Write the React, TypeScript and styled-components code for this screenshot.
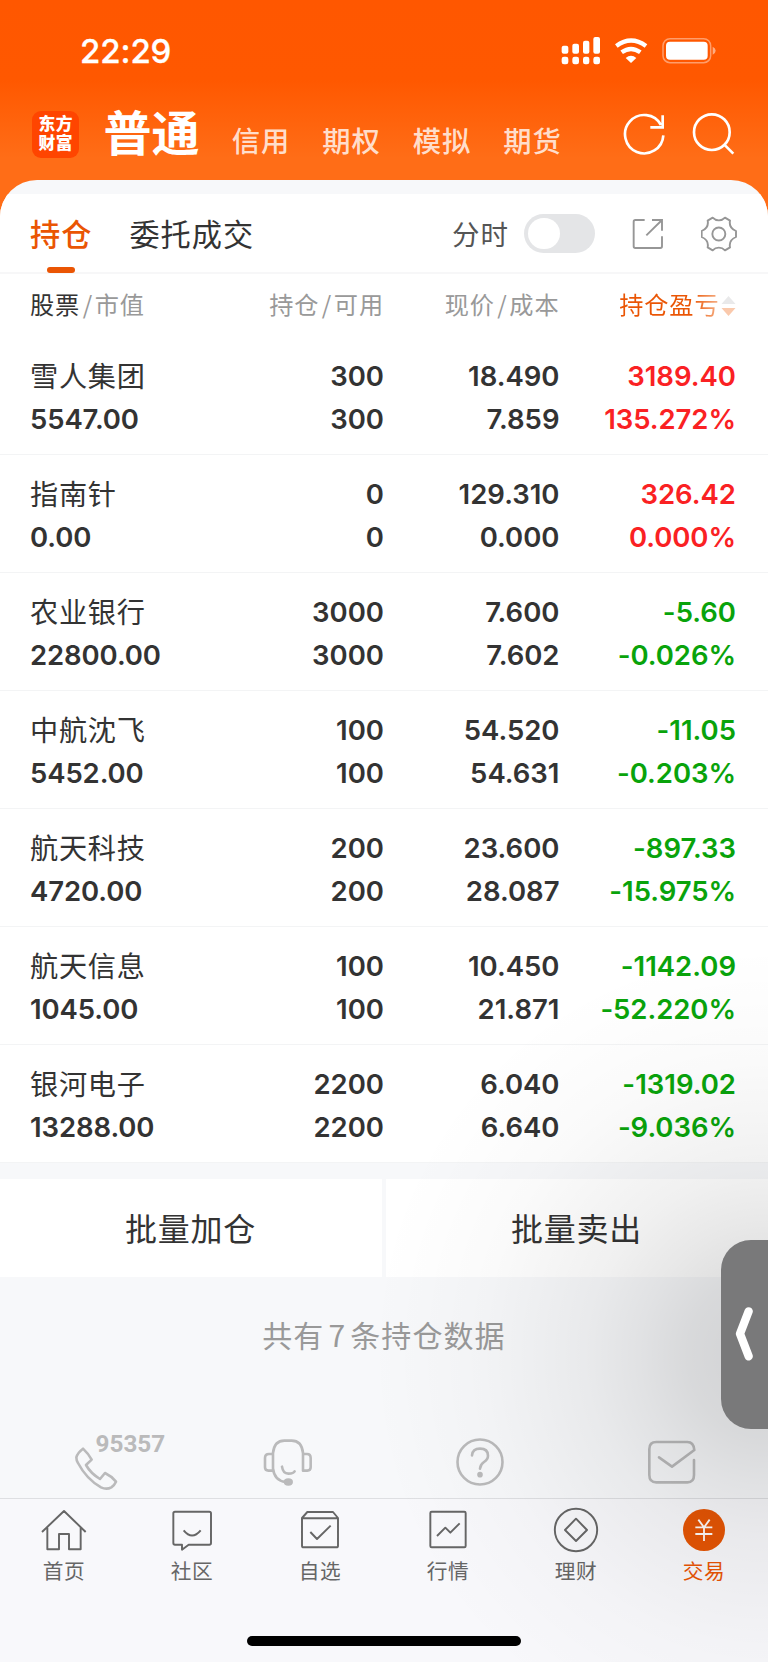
import React from "react";
import styled, { createGlobalStyle } from "styled-components";

const Global = createGlobalStyle`
  * { box-sizing: border-box; }
  body { margin: 0; background: #fff; }
`;

const CJK = `"Noto Sans CJK SC", sans-serif`;
const NUM = `Inter, "Noto Sans CJK SC", sans-serif`;

const Screen = styled.div`
  position: relative;
  width: 768px;
  height: 1662px;
  overflow: hidden;
  display: flex;
  flex-direction: column;
  background: #f7f8fa;
  font-family: ${CJK};
  color: #333;
`;

const Header = styled.header`
  height: 240px;
  margin-bottom: -60.5px;
  flex: none;
  background: linear-gradient(#ff5700 0, #ff5800 80px, #ff6d17 158px, #ff6d17 100%);
`;

const StatusBar = styled.div`
  height: 102px;
  display: flex;
  align-items: center;
  padding: 0 51px 0 80px;
  color: #fff;
`;

const Clock = styled.span`
  flex: 1;
  font: 500 33px/40px ${NUM};
  letter-spacing: -0.1px;
  -webkit-text-stroke: 0.3px #fff;
`;

const StatusIcons = styled.svg`
  width: 156px;
  height: 30px;
`;

const NavBar = styled.div`
  height: 64px;
  display: flex;
  align-items: center;
  padding: 0 33px 0 32px;
  color: #fff;
`;

const Logo = styled.div`
  width: 47px;
  height: 47px;
  border-radius: 9px;
  background: #ff4500;
  text-align: center;
  font-family: "Liberation Sans", "Noto Sans CJK SC", sans-serif;
  font-size: 16.8px;
  font-weight: 900;
  line-height: 19.7px;
  letter-spacing: 0.5px;
  padding: 4.2px 0 0 0.5px;
`;

const Account = styled.span<{ $active?: boolean }>`
  font-size: ${(p) => (p.$active ? 48 : 28.3)}px;
  font-weight: ${(p) => (p.$active ? 700 : 500)};
  line-height: 48px;
  letter-spacing: ${(p) => (p.$active ? 0 : 0.8)}px;
  white-space: nowrap;
  margin: ${(p) => (p.$active ? "-8px 0 0 24.5px" : "12px 0 0 32.3px")};
  color: ${(p) => (p.$active ? "#fff" : "rgba(255,255,255,.8)")};
`;

const NavIcons = styled.svg`
  width: 112px;
  height: 44px;
  margin-left: auto;
`;

const Sheet = styled.main`
  flex: 1;
  position: relative;
  border-radius: 37px 37px 0 0;
  background: #f7f8fa;
  overflow: hidden;
  display: flex;
  flex-direction: column;
  padding-top: 14.5px;
`;

const TabRow = styled.div`
  height: 80px;
  flex: none;
  display: flex;
  align-items: center;
  padding: 0 31.5px 0 30px;
  background: #fff;
  border-bottom: 2px solid #f7f7f8;
`;

const Tab = styled.span<{ $active?: boolean }>`
  position: relative;
  font-size: 30.2px;
  line-height: 78px;
  height: 78px;
  letter-spacing: 1px;
  font-weight: ${(p) => (p.$active ? 500 : 400)};
  color: ${(p) => (p.$active ? "#ea5504" : "#333")};
  margin-right: 37px;
  &::after {
    content: "";
    display: ${(p) => (p.$active ? "block" : "none")};
    position: absolute;
    left: 17px;
    bottom: -0.5px;
    width: 28px;
    height: 5.5px;
    border-radius: 3px;
    background: #ea5504;
  }
`;

const Tools = styled.div`
  margin-left: auto;
  display: flex;
  align-items: center;
  height: 78px;
`;

const ToolLabel = styled.span`
  font-size: 27.5px;
  line-height: 40px;
  margin-top: -1px;
  letter-spacing: 1px;
  color: #555;
`;

const Toggle = styled.span`
  width: 70.5px;
  height: 39.5px;
  border-radius: 20px;
  background: #e4e5e7;
  padding: 4px;
  margin: 0.5px 37.5px 0 15px;
  &::before {
    content: "";
    display: block;
    width: 31.5px;
    height: 31.5px;
    border-radius: 50%;
    background: #fff;
  }
`;

const ToolIcon = styled.svg<{ $w: number }>`
  width: ${(p) => p.$w}px;
  height: 36px;
  margin-top: 2px;
  fill: none;
  stroke: #969696;
  stroke-width: 5.7;
  & + & {
    margin-left: 36.5px;
  }
`;

const Line = styled.div`
  display: grid;
  grid-template-columns: 210px 144px 175.5px 176.5px;
  padding: 0 32px 0 30px;
  & > :nth-child(n + 2) {
    text-align: right;
  }
`;

const Columns = styled(Line)`
  height: 63px;
  flex: none;
  background: #fff;
  font-size: 24.2px;
  line-height: 60px;
  letter-spacing: 0.9px;
  color: #999;
`;

const Strong = styled.b`
  font-weight: 400;
  color: #333;
`;

const Slash = styled.span`
  display: inline-block;
  width: 14.5px;
  text-align: center;
  letter-spacing: 0;
`;

const SortHead = styled.span`
  display: flex;
  justify-content: flex-end;
  align-items: center;
  height: 60px;
  span {
    background: linear-gradient(90deg, #ea5504 72%, #f6b48c 100%);
    background-clip: text;
    -webkit-background-clip: text;
    color: transparent;
  }
  svg {
    width: 15px;
    height: 22px;
    margin: 4px 0 0 1.5px;
  }
`;

const Holding = styled.div`
  height: 118px;
  flex: none;
  background: #fff;
  padding-top: 18px;
  border-bottom: 1px solid #f3f4f5;
`;

const Cells = styled(Line)`
  height: 42.6px;
  font: 600 27.5px/42.6px ${NUM};
  font-feature-settings: "calt" 0;
`;

const Name = styled.span`
  font: 400 28.2px/40.6px ${CJK};
  letter-spacing: 0.7px;
`;

const Gain = styled.span<{ $up: boolean }>`
  color: ${(p) => (p.$up ? "#fa2123" : "#09a30b")};
`;

const Percent = styled(Gain)`
  letter-spacing: -0.05px;
`;

const Value = styled.span`
  letter-spacing: -0.1px;
`;

const Batch = styled.div`
  margin-top: 15.5px;
  flex: none;
  height: 98px;
  display: grid;
  grid-template-columns: 1fr 1fr;
  gap: 4px;
`;

const BatchButton = styled.button`
  border: 0;
  padding: 0 1px 2px 0;
  background: #fff;
  color: #333;
  font: 400 32px/96px ${CJK};
  letter-spacing: 0.8px;
`;

const Total = styled.p`
  margin: 0;
  text-align: center;
  font-size: 30px;
  line-height: 40px;
  padding-top: 37.5px;
  letter-spacing: 1.1px;
  color: #999;
`;

const Count = styled.span`
  margin: 0 4px;
`;

const Services = styled.div`
  margin-top: auto;
  height: 74px;
  flex: none;
  display: grid;
  grid-template-columns: repeat(4, 1fr);
  justify-items: center;
`;

const Service = styled.span`
  position: relative;
  svg {
    display: block;
    overflow: visible;
    width: 50px;
    height: 54px;
    margin-top: 10px;
    fill: none;
    stroke: #bababb;
    stroke-width: 7.8;
    stroke-linecap: round;
    stroke-linejoin: round;
  }
`;

const Hotline = styled.span`
  position: absolute;
  left: 24.5px;
  top: 5.5px;
  font: 700 24.3px/28px Roboto, sans-serif;
  color: #bababb;
`;

const TabBar = styled.nav`
  flex: none;
  height: 164px;
  border-top: 1px solid #dedfe2;
  background: #f8f8fb;
  display: flex;
  flex-direction: column;
  align-items: center;
`;

const TabItems = styled.div`
  width: 100%;
  display: grid;
  grid-template-columns: repeat(6, 1fr);
  height: 137px;
`;

const TabItem = styled.span<{ $active?: boolean }>`
  display: flex;
  flex-direction: column;
  align-items: center;
  font-size: 20.7px;
  line-height: 30px;
  letter-spacing: 0.6px;
  color: ${(p) => (p.$active ? "#ea5504" : "#666")};
  svg {
    width: 46px;
    height: 46px;
    margin: 8px 0 2px;
    fill: none;
    stroke: #666;
    stroke-width: 5.8;
    stroke-linejoin: round;
  }
`;

const HomeIndicator = styled.div`
  width: 274px;
  height: 10px;
  border-radius: 5px;
  background: #000;
`;

const Shade = styled.div`
  position: absolute;
  inset: 0;
  pointer-events: none;
  background: radial-gradient(
    400px 410px at 768px 1355px,
    rgba(0, 0, 0, 0.155) 0%,
    rgba(0, 0, 0, 0.125) 20%,
    rgba(0, 0, 0, 0.09) 32%,
    rgba(0, 0, 0, 0.06) 45%,
    rgba(0, 0, 0, 0.038) 58%,
    rgba(0, 0, 0, 0.02) 72%,
    rgba(0, 0, 0, 0.006) 88%,
    rgba(0, 0, 0, 0) 100%
  );
`;

const Handle = styled.aside`
  position: absolute;
  left: 721px;
  top: 1239.5px;
  width: 60px;
  height: 189px;
  border-radius: 30px 0 0 30px;
  background: #79797a;
  svg {
    display: block;
    width: 20px;
    height: 56px;
    margin: 66.5px 0 0 13px;
    fill: none;
    stroke: #fff;
    stroke-width: 25;
    stroke-linecap: round;
    stroke-linejoin: round;
  }
`;

type Row = [string, string, string, string, string, string, string];
const rows: Row[] = [
  ["雪人集团", "5547.00", "300", "18.490", "7.859", "3189.40", "135.272%"],
  ["指南针", "0.00", "0", "129.310", "0.000", "326.42", "0.000%"],
  ["农业银行", "22800.00", "3000", "7.600", "7.602", "-5.60", "-0.026%"],
  ["中航沈飞", "5452.00", "100", "54.520", "54.631", "-11.05", "-0.203%"],
  ["航天科技", "4720.00", "200", "23.600", "28.087", "-897.33", "-15.975%"],
  ["航天信息", "1045.00", "100", "10.450", "21.871", "-1142.09", "-52.220%"],
  ["银河电子", "13288.00", "2200", "6.040", "6.640", "-1319.02", "-9.036%"],
];

const tabs = [
  {
    label: "首页",
    icon: (
      <svg viewBox="124 261 138 138">
        <path d="M127 336 193 273 258 336M143 323V388H178V342H208V388H243V323" />
      </svg>
    ),
  },
  {
    label: "社区",
    icon: (
      <svg viewBox="507 261 138 138">
        <path d="M525 275H628Q633 275 633 280V369Q633 374 628 374H566L546 389V374H525Q520 374 520 369V280Q520 275 525 275ZM551 331Q576 362 602 331" />
      </svg>
    ),
  },
  {
    label: "自选",
    icon: (
      <svg viewBox="890 261 138 138">
        <path d="M905 294 921 276H998L1013 294V377Q1013 382 1008 382H910Q905 382 905 377ZM905 295H1013M930 336 950 357 991 317" />
      </svg>
    ),
  },
  {
    label: "行情",
    icon: (
      <svg viewBox="123 261 138 138">
        <rect x="139" y="275" width="106" height="107" rx="4" />
        <path d="M159 348 184 323 199 338 227 310" />
      </svg>
    ),
  },
  {
    label: "理财",
    icon: (
      <svg viewBox="507 261 138 138">
        <circle cx="576" cy="330" r="63.5" />
        <path d="M576 296 609 330 576 363 543 330Z" />
      </svg>
    ),
  },
  {
    label: "交易",
    active: true,
    icon: (
      <svg viewBox="890 261 138 138">
        <circle cx="959" cy="330" r="63" fill="#e65504" stroke="none" />
        <path d="M942 299 959 322 976 299M933 322H984M933 342H984M959 322V363" stroke="#fffaf8" strokeWidth="5.5" />
      </svg>
    ),
  },
];

export default function App() {
  return (
    <>
      <Global />
      <Screen>
        <Header>
          <StatusBar>
            <Clock>22:29</Clock>
            <StatusIcons viewBox="531 109 468 90" fill="#fff">
              <rect x="533" y="138" width="20" height="24" rx="6" />
              <rect x="565" y="132" width="20" height="30" rx="6" />
              <rect x="597" y="123" width="19" height="39" rx="6" />
              <rect x="628" y="112" width="20" height="50" rx="6" />
              <rect x="533" y="171" width="20" height="23" rx="7" />
              <rect x="565" y="171" width="20" height="23" rx="7" />
              <rect x="597" y="171" width="19" height="23" rx="7" />
              <rect x="628" y="171" width="20" height="23" rx="7" />
              <path d="M697 139Q741 106 786 139M713 158Q741 138 769 158" fill="none" stroke="#fff" strokeWidth="13" />
              <path d="M725 175Q741 161 757 175L741 190Z" />
              <rect x="837" y="117" width="143" height="72" rx="21" fill="none" stroke="#fff" strokeOpacity=".42" strokeWidth="4.5" />
              <rect x="846" y="126" width="125" height="54" rx="12" />
              <path d="M986 141Q995 146 995 153T986 165Z" fillOpacity=".5" />
            </StatusIcons>
          </StatusBar>
          <NavBar>
            <Logo>
              东方
              <br />
              财富
            </Logo>
            <Account $active>普通</Account>
            <Account>信用</Account>
            <Account>期权</Account>
            <Account>模拟</Account>
            <Account>期货</Account>
            <NavIcons viewBox="717 335 336 132" fill="none" stroke="#fff" strokeWidth="8">
              <path d="M838 405A57.500 57.500 0 1 1 831 374M836 345V381H799" />
              <circle cx="983.500" cy="395.500" r="53.500" />
              <path d="M1021 433 1048 460" />
            </NavIcons>
          </NavBar>
        </Header>
        <Sheet>
          <TabRow>
            <Tab $active>持仓</Tab>
            <Tab>委托成交</Tab>
            <Tools>
              <ToolLabel>分时</ToolLabel>
              <Toggle />
              <ToolIcon $w={32} viewBox="744 138 96 108">
                <path d="M782 150H754Q749 150 749 155V229Q749 234 754 234H829Q834 234 834 229V199M804 150H834V182M834 150 787 196" />
              </ToolIcon>
              <ToolIcon $w={36} viewBox="32 33 108 108">
                <circle cx="85.500" cy="87" r="19.500" />
                <path
                  d="M67 38C77 49 94 49 104 38L119 47C116 62 123 72 137 78V96C123 102 116 112 119 127L104 136C94 125 77 125 67 136L52 127C55 112 48 102 34 96V78C48 72 55 62 52 47Z"
                  strokeLinejoin="round"
                />
              </ToolIcon>
            </Tools>
          </TabRow>
          <Columns>
            <span><Strong>股票</Strong><Slash>/</Slash>市值</span>
            <span>持仓<Slash>/</Slash>可用</span>
            <span>现价<Slash>/</Slash>成本</span>
            <SortHead>
              <span>持仓盈亏</span>
              <svg viewBox="0 0 15 22">
                <path d="M7.500 1 14.500 9H.5Z" fill="#e9e9ea" />
                <path d="M7.500 21 14.500 13H.5Z" fill="#fac9ac" />
              </svg>
            </SortHead>
          </Columns>
          {rows.map(([name, value, qty, price, cost, gain, pct]) => (
            <Holding key={name}>
              <Cells>
                <Name>{name}</Name>
                <span>{qty}</span>
                <span>{price}</span>
                <Gain $up={gain[0] !== "-"}>{gain}</Gain>
              </Cells>
              <Cells>
                <Value>{value}</Value>
                <span>{qty}</span>
                <span>{cost}</span>
                <Percent $up={gain[0] !== "-"}>{pct}</Percent>
              </Cells>
            </Holding>
          ))}
          <Batch>
            <BatchButton>批量加仓</BatchButton>
            <BatchButton>批量卖出</BatchButton>
          </Batch>
          <Total>
            共有<Count>7</Count>条持仓数据
          </Total>
          <Services>
            <Service>
              <svg viewBox="215 42 150 162">
                <path d="M251 86Q235 98 231 112 231 122 236 129 262 178 305 202 322 210 336 202 345 196 350 185 336 168 317 159L302 177Q274 160 260 135L277 119Q267 101 251 86Z" />
              </svg>
              <Hotline>95357</Hotline>
            </Service>
            <Service>
              <svg viewBox="790 42 150 162">
                <path d="M820 99V145Q824 182 858 186M820 99Q824 62 854 62H876Q906 62 910 99V152M820 102H808Q796 102 796 114V142Q796 152 806 152H820M910 102H922Q933 102 933 114V142Q933 152 923 152H910M847 140Q850 161 866 161T885 154" />
                <ellipse cx="866" cy="186" rx="10" ry="7" fill="#bababb" />
              </svg>
            </Service>
            <Service>
              <svg viewBox="214 42 150 162">
                <circle cx="289" cy="126" r="67.500" />
                <path d="M265 106Q267 86 289 86 313 86 313 107 313 118 301 126 290 133 289 146" />
                <circle cx="289" cy="164" r="4.500" fill="#bababb" />
              </svg>
            </Service>
            <Service>
              <svg viewBox="790 42 150 162">
                <path d="M931 120V165Q931 187 911 187H818Q797 187 797 165V87Q797 66 818 66H911Q930 66 932 90L865 140 826 112" />
              </svg>
            </Service>
          </Services>
          <TabBar>
            <TabItems>
              {tabs.map((t) => (
                <TabItem key={t.label} $active={t.active}>
                  {t.icon}
                  {t.label}
                </TabItem>
              ))}
            </TabItems>
            <HomeIndicator />
          </TabBar>
        </Sheet>
        <Shade />
        <Handle>
          <svg viewBox="1050 500 60 168">
            <path d="M1094 516 1068 583 1094 651" />
          </svg>
        </Handle>
      </Screen>
    </>
  );
}
